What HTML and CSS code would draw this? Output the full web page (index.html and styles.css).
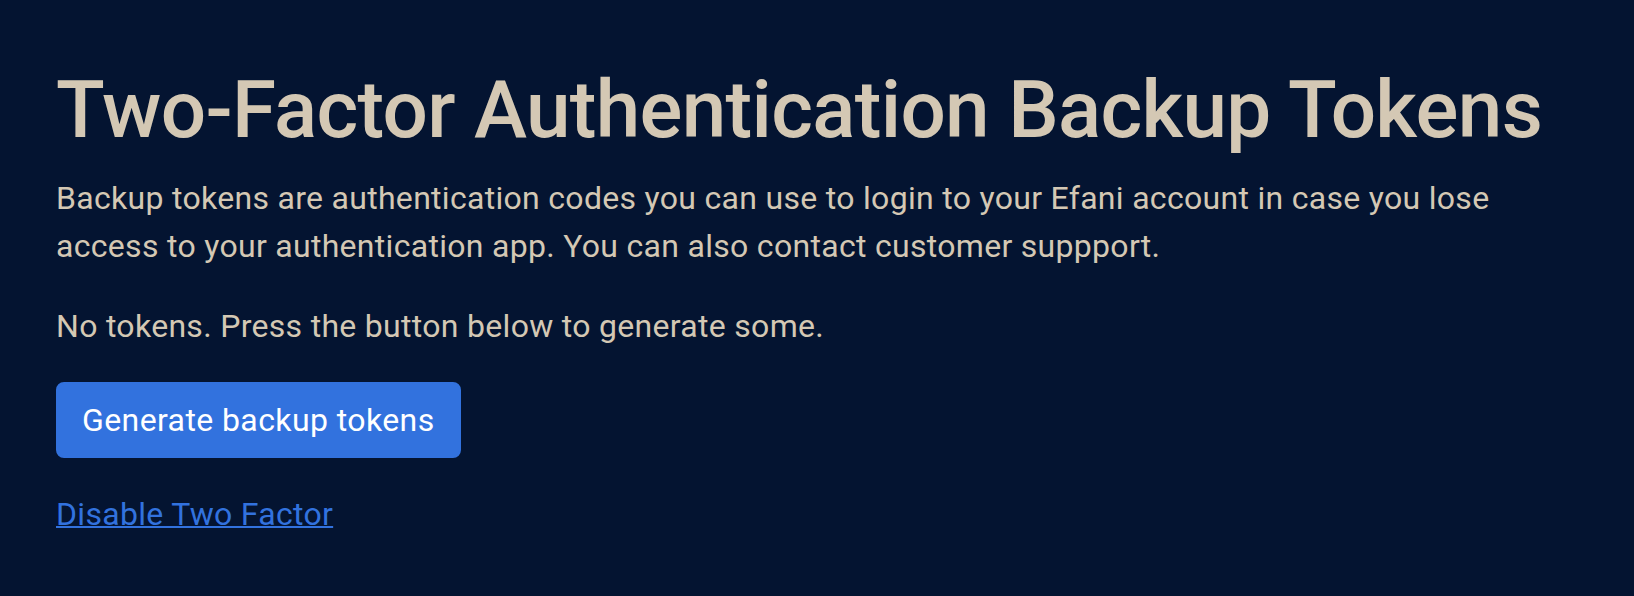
FILE: index.html
```html
<!DOCTYPE html>
<html lang="en">
<head>
	<meta charset="UTF-8">
	<title>Two-Factor Authentication Backup Tokens</title>
	<link rel="stylesheet" href="styles.css">
</head>
<body>
	<div class="container">
		<h1 class="title">Two-Factor Authentication Backup Tokens</h1>
		<p>Backup tokens are authentication codes you can use to login to your Efani account in case you lose access to your authentication app. You can also contact customer suppport.</p>
		<p>No tokens. Press the button below to generate some.</p>
		<form class="token-form">
			<button type="button" class="btn">Generate backup tokens</button>
		</form>
		<p><a href="#" class="link">Disable Two Factor</a></p>
	</div>
</body>
</html>
```

FILE: styles.css
```css
* {
	margin: 0;
	padding: 0;
	box-sizing: border-box;
}
html, body {
	height: 100%;
}
body {
	background-color: #041431;
	color: #d4c8b4;
	font-family: Roboto, "Noto Sans", sans-serif;
	font-size: 32px;
	line-height: 48px;
	letter-spacing: 0.3px;
}
.container {
	padding: 62px 78px 0 56px;
}
.title {
	font-size: 80px;
	font-weight: 500;
	line-height: 96px;
	letter-spacing: -0.68px;
	margin-bottom: 16px;
}
p {
	margin-bottom: 32px;
}
.token-form {
	margin-bottom: 32px;
}
.btn {
	display: inline-block;
	font-family: inherit;
	font-size: 32px;
	line-height: 48px;
	letter-spacing: 0.4px;
	padding: 12px 24px;
	color: #fff;
	background-color: #3272de;
	border: 2px solid #3272de;
	border-radius: 8px;
}
.link {
	color: #3272de;
	text-decoration: underline;
	text-decoration-thickness: 2px;
}
```
